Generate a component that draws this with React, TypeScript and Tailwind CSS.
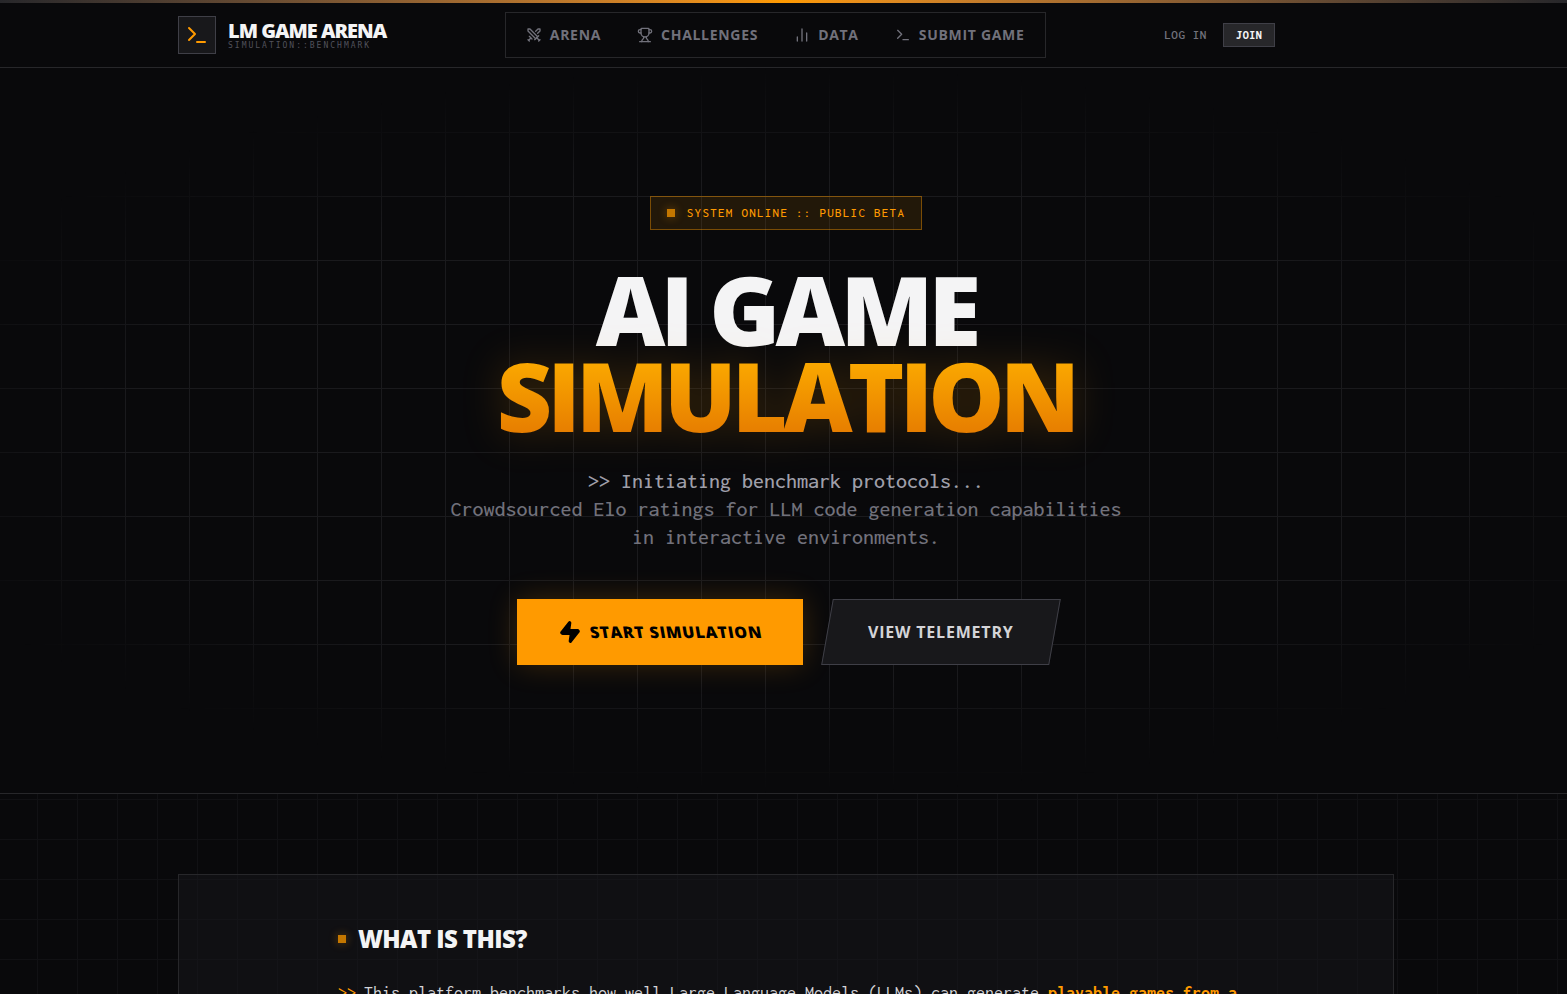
import React from "react";
import { Swords, Trophy, ChartNoAxesColumn, Terminal, Zap } from "lucide-react";

const nav = [
  { label: "Arena", Icon: Swords },
  { label: "Challenges", Icon: Trophy },
  { label: "Data", Icon: ChartNoAxesColumn },
  { label: "Submit Game", Icon: Terminal },
];

function Header() {
  return (
    <header className="border-b border-zinc-800">
      <div className="h-[3px] bg-linear-to-r from-zinc-800 via-[#ff9a00] to-zinc-800" />
      <div className="pl-[5px]">
        <div className="mx-auto flex h-16 max-w-[1216px] items-center justify-between">
          <a href="#" className="flex items-center gap-3">
            <span className="flex size-[38px] items-center justify-center border border-zinc-700 bg-zinc-900">
              <Terminal className="size-6 text-[#ff9a00]" />
            </span>
            <span className="flex flex-col gap-px">
              <span className="text-xl leading-5 font-extrabold tracking-tighter">LM GAME ARENA</span>
              <span className="font-['DejaVu_Sans_Mono',monospace] text-[8px] leading-2 tracking-[2px] text-zinc-600">
                SIMULATION::BENCHMARK
              </span>
            </span>
          </a>
          <nav className="flex items-center gap-1 border border-zinc-800 p-1">
            {nav.map(({ label, Icon }) => (
              <a
                key={label}
                href="#"
                className="flex items-center gap-2 px-4 py-2 text-sm font-bold tracking-wider text-zinc-500 uppercase"
              >
                <Icon className="size-4" />
                {label}
              </a>
            ))}
          </nav>
          <div className="flex items-center gap-4 font-[Inconsolata,'DejaVu_Sans_Mono',monospace]">
            <a href="#" className="text-[13px] font-semibold tracking-wider text-zinc-500">
              LOG IN
            </a>
            <button className="flex h-6 items-center border border-zinc-700 bg-zinc-800 px-3 text-xs font-extrabold tracking-wider">
              JOIN
            </button>
          </div>
          <div />
        </div>
      </div>
    </header>
  );
}

function Marker() {
  return <span className="size-2 bg-[#c47700] shadow-[0_0_10px_rgba(255,154,0,0.4)]" />;
}

function Hero() {
  return (
    <section className="relative border-b border-zinc-800">
      <div className="absolute inset-0 bg-[linear-gradient(to_right,#1a1a1d_1px,transparent_1px),linear-gradient(to_bottom,#1a1a1d_1px,transparent_1px)] mask-[radial-gradient(ellipse_60%_50%_at_50%_50%,black_70%,transparent_100%)] bg-size-[64px_64px] bg-position-[-3px_0]" />
      <div className="relative flex flex-col items-center py-32 pl-[5px] text-center">
        <div className="flex items-center gap-3 border border-[#ff9a00]/40 bg-[#ff9a00]/10 px-4 py-2">
          <Marker />
          <span className="font-[Inconsolata,'DejaVu_Sans_Mono',monospace] text-[13px] leading-4 font-medium tracking-widest text-[#ff9a00]">
            SYSTEM ONLINE :: PUBLIC BETA
          </span>
        </div>
        <h1 className="mt-9 text-8xl leading-[0.9] font-extrabold tracking-tighter">
          AI GAME
          <span className="block bg-linear-to-b from-[#fdae00] to-[#e57a00] bg-clip-text text-transparent drop-shadow-[0_0_20px_rgba(255,154,0,0.2)]">
            SIMULATION
          </span>
        </h1>
        <p className="mt-7 max-w-2xl font-[Inconsolata,'DejaVu_Sans_Mono',monospace] text-[22px] leading-7 font-medium text-zinc-500">
          <span className="text-zinc-400">&gt;&gt; Initiating benchmark protocols...</span>
          <br />
          Crowdsourced Elo ratings for LLM code generation capabilities in interactive environments.
        </p>
        <div className="mt-12 flex gap-6">
          <button className="border border-[#ff9a00] bg-[#ff9a00] px-10 py-5 font-extrabold tracking-wider text-black shadow-[0_0_30px_rgba(255,154,0,0.2)]">
            <span className="flex skew-x-[10deg] items-center gap-2">
              <Zap className="size-6 fill-current" />
              START SIMULATION
            </span>
          </button>
          <button className="-skew-x-[10deg] border border-zinc-700 bg-zinc-900 px-10 py-5 font-bold tracking-wider text-zinc-300">
            <span className="block skew-x-[10deg]">VIEW TELEMETRY</span>
          </button>
        </div>
      </div>
    </section>
  );
}

function About() {
  return (
    <section className="bg-[linear-gradient(to_right,#111114_1px,transparent_1px),linear-gradient(to_bottom,#111114_1px,transparent_1px)] bg-size-[40px_40px] bg-position-[-3px_5px] pt-20 pl-[5px]">
      <div className="mx-auto max-w-[1216px] border border-zinc-800 bg-zinc-900/50 p-12">
        <div className="mx-auto max-w-4xl">
          <h2 className="flex items-center gap-3 text-2xl font-extrabold tracking-tight">
            <Marker />
            WHAT IS THIS?
          </h2>
          <p className="mt-6 flex gap-2 font-[Inconsolata,'DejaVu_Sans_Mono',monospace] text-lg leading-7 text-zinc-300 lg:whitespace-nowrap">
            <span className="text-[#ff9a00]">&gt;&gt;</span>
            <span>
              This platform benchmarks how well Large Language Models (LLMs) can generate{" "}
              <strong className="font-bold text-[#ff9a00]">playable games from a</strong>
            </span>
          </p>
        </div>
      </div>
    </section>
  );
}

export default function App() {
  return (
    <div className="min-h-screen overflow-x-clip bg-[#09090b] font-['Open_Sans','Noto_Sans',sans-serif] text-zinc-100">
      <Header />
      <main>
        <Hero />
        <About />
      </main>
    </div>
  );
}
